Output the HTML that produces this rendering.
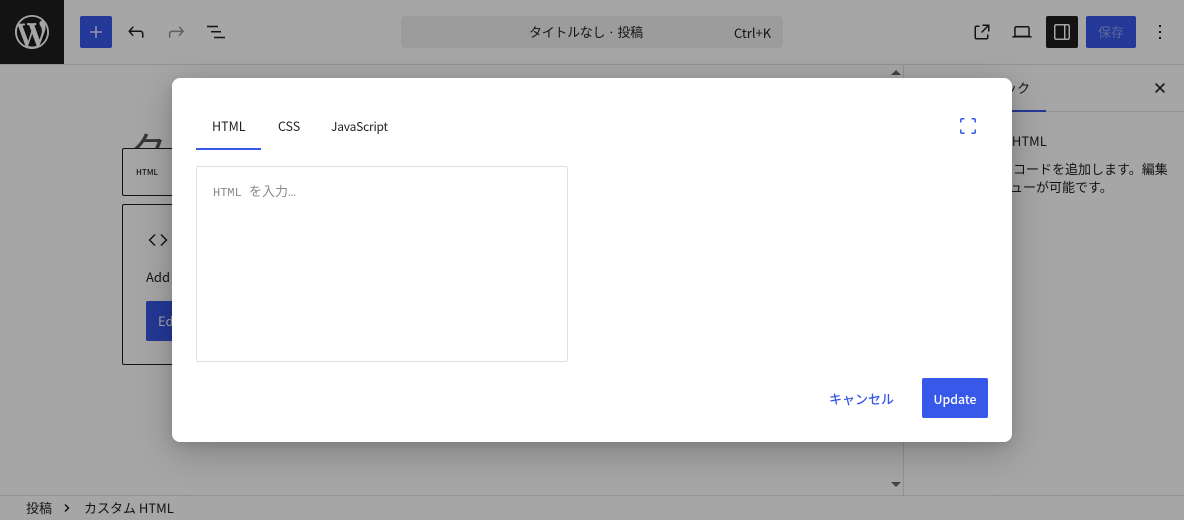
<!DOCTYPE html>
<html lang="ja"><head><meta charset="utf-8">
<style>
*{box-sizing:border-box}
html,body{margin:0;padding:0;width:1184px;height:520px;overflow:hidden;background:#fff}
body{font-family:"Noto Sans CJK JP","Liberation Sans",sans-serif;font-size:13px;color:#1e1e1e;position:relative}
.a{position:absolute;white-space:nowrap;line-height:20px}
svg{position:absolute;display:block}
#ov{position:absolute;left:0;top:0;width:1184px;height:520px;background:rgba(0,0,0,.35)}
#m{position:absolute;left:172px;top:78px;width:840px;height:364px;background:#fff;border-radius:8px;box-shadow:0 10px 40px rgba(0,0,0,.22),0 4px 12px rgba(0,0,0,.1)}
</style></head><body>
<!-- top bar -->
<div class="a" style="left:0;top:0;width:1184px;height:65px;border-bottom:1px solid #e0e0e0"></div>
<div class="a" style="left:0;top:0;width:64px;height:64px;background:#1e1e1e"></div>
<svg style="left:15px;top:15px" width="34" height="34" viewBox="0 0 20 20" fill="#fff"><path d="M20 10c0-5.51-4.49-10-10-10C4.480 0 0 4.490 0 10c0 5.520 4.480 10 10 10 5.510 0 10-4.480 10-10zM7.780 15.370L4.370 6.220c.55-.02 1.170-.08 1.170-.08.5-.06.44-1.130-.06-1.110 0 0-1.450.11-2.370.11-.18 0-.37 0-.58-.01C4.120 2.690 6.890 1.050 10 1.050c2.320 0 4.430.89 6.010 2.350-.67-.11-1.620.38-1.620 1.540 0 .72.43 1.330.89 2.060.35.61.55 1.360.55 2.460 0 1.490-1.400 5-1.400 5l-3.030-8.370c.54-.02.82-.17.82-.17.5-.05.44-1.250-.06-1.220 0 0-1.440.12-2.380.12-.87 0-2.330-.12-2.330-.12-.5-.03-.56 1.200-.06 1.220l.92.080 1.260 3.410zM17.410 10c.24-.64.74-1.870.43-4.250.7 1.290 1.050 2.710 1.050 4.250 0 3.290-1.730 6.240-4.400 7.780.97-2.590 1.940-5.200 2.920-7.780zM6.100 18.090C3.120 16.650 1.110 13.530 1.110 10c0-1.300.23-2.480.72-3.590C3.250 10.300 4.670 14.200 6.100 18.090zm4.030-6.970l2.580 6.990c-.86.29-1.740.45-2.710.45-.79 0-1.570-.11-2.290-.33.81-2.380 1.630-4.740 2.420-7.110z"/></svg>
<div class="a" style="left:80px;top:16px;width:32px;height:32px;background:#3858e9;border-radius:2px"></div>
<svg style="left:84px;top:20px" width="24" height="24" viewBox="0 0 24 24" fill="#fff"><path d="M11.350 6h1.300v5.350H18v1.300h-5.350V18h-1.300v-5.350H6v-1.300h5.350z"/></svg>
<svg style="left:124px;top:20px" width="24" height="24" viewBox="0 0 24 24" fill="#1e1e1e"><path d="M18.300 11.700c-.6-.6-1.400-.9-2.300-.9H6.700l2.900-3.300-1.100-1-4.500 5L8.500 16.500l1.100-1-2.900-3.200H16c.5 0 .9.200 1.300.5.300.3.500.8.500 1.300V18h1.500v-3.800c0-1-.4-1.800-1-2.500z" transform="translate(.2 -.3)"/></svg>
<svg style="left:164px;top:20px" width="24" height="24" viewBox="0 0 24 24" fill="#949494"><path d="M15.600 6.500l-1.100 1 2.900 3.300H8c-.9 0-1.700.3-2.300.9-.7.700-1 1.500-1 2.500V18h1.500v-3.800c0-.5.200-1 .5-1.300.4-.3.800-.5 1.300-.5h9.200l-2.900 3.200 1.100 1 4.500-5-4.300-5.100z" transform="translate(.2 -.3)"/></svg>
<svg style="left:204px;top:20px" width="24" height="24" viewBox="0 0 24 24" fill="#1e1e1e"><path d="M3 6h11v1.500H3zM7 11.250h10v1.500H7zM10 17h11v1.500H10z" transform="translate(0 -.3)"/></svg>
<div class="a" style="left:401px;top:16px;width:382px;height:32px;background:#f0f0f0;border-radius:4px"></div>
<div class="a" style="left:529px;top:22px;color:#1e1e1e;letter-spacing:-.3px">タイトルなし · 投稿</div>
<div class="a" style="left:734px;top:23px;color:#1e1e1e">Ctrl+K</div>
<svg style="left:970px;top:20px" width="24" height="24" viewBox="0 0 24 24" fill="#1e1e1e"><path d="M19.500 4.500h-7V6h4.440l-5.970 5.970 1.060 1.060L18 7.060v4.440h1.500v-7zm-13 1a2 2 0 00-2 2v10a2 2 0 002 2h10a2 2 0 002-2v-3H17v3a.5.500 0 01-.5.500h-10a.5.500 0 01-.5-.5v-10a.5.500 0 01.5-.5h3V5.500h-3z"/></svg>
<svg style="left:1010px;top:20px" width="24" height="24" viewBox="0 0 24 24" fill="#1e1e1e"><path d="M20.500 16h-.7V8c0-1.100-.9-2-2-2H6.200c-1.100 0-2 .9-2 2v8h-.7c-.8 0-1.500.7-1.500 1.500h20c0-.8-.7-1.500-1.500-1.500zM5.700 8c0-.3.200-.5.500-.5h11.600c.3 0 .5.200.5.500v7.600H5.700V8z"/></svg>
<div class="a" style="left:1046px;top:16px;width:32px;height:32px;background:#1e1e1e;border-radius:2px"></div>
<svg style="left:1050px;top:20px" width="24" height="24" viewBox="0 0 24 24" fill="#fff"><path d="M18 4H6c-1.100 0-2 .9-2 2v12c0 1.100.9 2 2 2h12c1.100 0 2-.9 2-2V6c0-1.100-.9-2-2-2zM5.500 18V6c0-.3.200-.5.500-.5h8v13H6c-.3 0-.5-.2-.5-.5zm13 0c0 .3-.2.500-.5.500h-2.500v-13H18c.3 0 .5.200.5.500v12z"/></svg>
<div class="a" style="left:1086px;top:16px;width:50px;height:32px;background:#3858e9;border-radius:2px;color:#8c9fee;text-align:center;line-height:32px;font-size:13px">保存</div>
<svg style="left:1148px;top:20px" width="24" height="24" viewBox="0 0 24 24" fill="#1e1e1e"><path d="M13 19h-2v-2h2v2zm0-6h-2v-2h2v2zm0-6h-2V5h2v2z"/></svg>
<!-- editor -->
<div class="a" style="left:127px;top:125px;font-size:40px;line-height:48px;color:#555">タ</div>
<div class="a" style="left:122px;top:148px;width:200px;height:48px;background:#fff;border:1px solid #1e1e1e;border-radius:2px"></div>
<div class="a" style="left:136px;top:163px;font-size:8px;font-weight:500">HTML</div>
<div class="a" style="left:122px;top:204px;width:200px;height:161px;border:1px solid #1e1e1e;border-radius:2px"></div>
<svg style="left:146px;top:228px" width="24" height="24" viewBox="0 0 24 24" fill="#1e1e1e"><path d="M8.500 6L2.500 12l6 6 1-1-5-5 5-5zM15.500 6l-1 1 5 5-5 5 1 1 6-6z"/></svg>
<div class="a" style="left:146px;top:267px">Add</div>
<div class="a" style="left:146px;top:301px;width:80px;height:40px;background:#3858e9;border-radius:2px;color:#fff;line-height:40px;padding-left:12px">Edit</div>
<!-- scrollbar -->
<svg style="left:890px;top:68px" width="12" height="8"><path d="M1 7h10L6 2z" fill="#505050" opacity=".85"/></svg>
<svg style="left:890px;top:481px" width="12" height="8"><path d="M1 1h10L6 6z" fill="#505050" opacity=".85"/></svg>
<!-- sidebar -->
<div class="a" style="left:903px;top:65px;width:1px;height:431px;background:#e0e0e0"></div>
<div class="a" style="left:904px;top:111px;width:280px;height:1px;background:#e0e0e0"></div>
<div class="a" style="left:904px;top:110px;width:142px;height:2px;background:#3858e9"></div>
<div class="a" style="left:978px;top:78px">ブロック</div>
<svg style="left:1148px;top:76px" width="24" height="24" viewBox="0 0 24 24" fill="#1e1e1e"><path d="M13.100 12l3.900-3.900-1.100-1.100-3.900 3.900-3.900-3.900-1.100 1.100 3.900 3.900-3.900 3.900 1.100 1.100 3.900-3.900 3.900 3.900 1.100-1.100z"/></svg>
<div class="a" style="left:957px;top:131px">カスタム HTML</div>
<div class="a" style="left:961px;top:159px">カスタムコードを追加します。編集</div>
<div class="a" style="left:971px;top:177px">プレビューが可能です。</div>
<!-- footer -->
<div class="a" style="left:0;top:495px;width:1184px;height:1px;background:#e0e0e0"></div>
<div class="a" style="left:26px;top:498px">投稿</div>
<svg style="left:62px;top:503px" width="10" height="10" viewBox="0 0 10 10"><path d="M3 1.500L6.500 5 3 8.500" fill="none" stroke="#1e1e1e" stroke-width="1.500"/></svg>
<div class="a" style="left:84px;top:498px">カスタム HTML</div>
<!-- overlay -->
<div id="ov"></div>
<!-- modal -->
<div id="m"></div>
<div class="a" style="left:212px;top:116px;color:#1e1e1e;font-size:12.500px">HTML</div>
<div class="a" style="left:278px;top:116px;color:#1e1e1e;font-size:12.500px;letter-spacing:-.1px">CSS</div>
<div class="a" style="left:331px;top:116.500px;color:#1e1e1e;font-size:12px;letter-spacing:-.2px">JavaScript</div>
<div class="a" style="left:196px;top:148px;width:65px;height:2px;background:#3858e9"></div>
<svg style="left:956px;top:114px" width="24" height="24" viewBox="0 0 24 24" fill="none" stroke="#3858e9" stroke-width="1.500"><path d="M8.500 4.750H6A1.250 1.250 0 004.750 6v2.500M15.500 4.750H18A1.250 1.250 0 0119.250 6v2.500M8.500 19.250H6A1.250 1.250 0 014.750 18v-2.500M15.500 19.250H18A1.250 1.250 0 0019.250 18v-2.500"/></svg>
<div class="a" style="left:196px;top:166px;width:372px;height:196px;border:1px solid #e0e0e0;border-radius:2px"></div>
<div class="a" style="left:213px;top:181px;color:#8a8a8a;font-size:12px;font-family:'Liberation Mono','Noto Sans CJK JP',monospace">HTML <span style="font-size:13px;font-family:'Noto Sans CJK JP',sans-serif">を入力</span><span style="font-size:13px;font-family:'Liberation Mono',monospace">…</span></div>
<div class="a" style="left:829px;top:389px;color:#3858e9;font-size:13px;font-weight:500">キャンセル</div>
<div class="a" style="left:922px;top:378px;width:66px;height:40px;background:#3858e9;border-radius:2px;color:#fff;text-align:center;line-height:42px;font-size:12.300px;font-weight:500">Update</div>
</body></html>
